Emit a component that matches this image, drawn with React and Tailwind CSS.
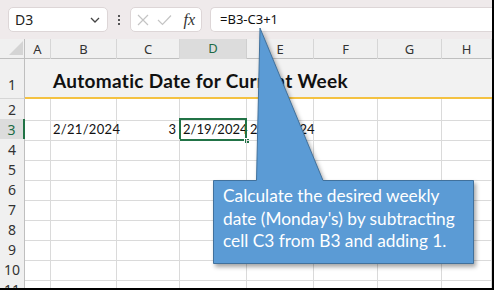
import React from "react";

const cols = ["A", "B", "C", "D", "E", "F", "G", "H"];
const grid =
  "grid grid-cols-[25px_26px_66px_63px_67px_67px_64px_64px_1fr]";
const uiFont = { fontFamily: '"Noto Sans", "Open Sans", sans-serif' };
const cellFont = { fontFamily: 'Lato, "Open Sans", sans-serif' };

function FormulaBar() {
  return (
    <div className="h-[39px] bg-[#efeaeb] flex items-center" style={uiFont}>
      <div className="ml-[8px] w-[100px] h-[25px] bg-white rounded-[5px] border border-[#ddd6d7] flex items-center justify-between pl-[6px] pr-[6px]">
        <span className="text-[14px] text-[#222]">D3</span>
        <svg width="12" height="8" viewBox="0 0 12 8">
          <path d="M2 2 L6 6 L10 2" fill="none" stroke="#444" strokeWidth="1.3" />
        </svg>
      </div>
      <div className="w-[22px] flex flex-col items-center gap-[2px]">
        <span className="w-[2px] h-[2px] bg-[#555]" />
        <span className="w-[2px] h-[2px] bg-[#555]" />
        <span className="w-[2px] h-[2px] bg-[#555]" />
      </div>
      <div className="w-[72px] h-[25px] bg-white rounded-[5px] border border-[#ddd6d7] flex items-center px-[4px] gap-[5px]">
        <svg width="16" height="16" viewBox="0 0 16 16">
          <path d="M3 3 L13 13 M13 3 L3 13" stroke="#c4c4c4" strokeWidth="1.2" />
        </svg>
        <svg width="17" height="16" viewBox="0 0 17 16">
          <path d="M2 8 L6.5 12.5 L15 3.5" fill="none" stroke="#c4c4c4" strokeWidth="1.2" />
        </svg>
        <span
          className="ml-auto mr-[2px] text-[16px] italic text-[#333]"
          style={{ fontFamily: '"Liberation Serif", serif' }}
        >
          fx
        </span>
      </div>
      <div className="ml-[8px] flex-1 h-[25px] bg-white rounded-l-[5px] border border-r-0 border-[#ddd6d7] flex items-center pl-[9px]">
        <span className="text-[13px] text-[#111]">=B3-C3+1</span>
      </div>
    </div>
  );
}

function Sheet() {
  const rows = [2, 3, 4, 5, 6, 7, 8, 9, 10, 11];
  return (
    <div style={uiFont}>
      {/* column headers */}
      <div className={`${grid} h-[20px] bg-[#f0f0f0] border-b border-[#bfbfbf]`}>
        <div className="relative border-r border-[#bfbfbf]">
          <svg className="absolute left-[9px] top-[2px]" width="14" height="14" viewBox="0 0 14 14">
            <path d="M14 0 L14 14 L0 14 Z" fill="#d4d4d4" />
          </svg>
        </div>
        {cols.map((c) => (
          <div
            key={c}
            className={
              c === "D"
                ? "flex items-center justify-center text-[13px] text-[#1d6b45] bg-[#dcdcdc] border-b-2 border-[#217346] border-r border-r-[#cfcfcf]"
                : "flex items-center justify-center text-[13px] text-[#333] border-r border-[#d6d6d6]"
            }
          >
            {c}
          </div>
        ))}
        <div />
      </div>

      {/* row 1 */}
      <div className={`${grid} h-[40px]`}>
        <div className="bg-[#f0f0f0] border-r border-b border-[#bfbfbf] border-b-[#d6d6d6] flex items-end justify-center pb-[3px] text-[14px] text-[#333]">
          1
        </div>
        <div className="col-span-8 bg-[#f2f2f2] border-b-2 border-[#f4c242] flex items-end pl-[28px] pb-[2px]">
          <span
            className="text-[19px] font-bold tracking-[0.3px] text-[#111] whitespace-nowrap"
            style={cellFont}
          >
            Automatic Date for Current Week
          </span>
        </div>
      </div>

      {rows.map((r) => (
        <div key={r} className={`${grid} h-[20px]`}>
          <div
            className={
              r === 3
                ? "bg-[#dcdcdc] border-r-2 border-r-[#217346] border-b border-b-[#d6d6d6] flex items-center justify-center text-[14px] text-[#1d6b45]"
                : "bg-[#f0f0f0] border-r border-r-[#bfbfbf] border-b border-b-[#d6d6d6] flex items-center justify-center text-[14px] text-[#333]"
            }
          >
            {r}
          </div>
          {cols.map((c) => (
            <div
              key={c}
              className="relative border-r border-b border-[#dadada] flex items-center text-[13px] text-[#111] whitespace-nowrap"
              style={cellFont}
            >
              {r === 3 && c === "B" && <span className="pl-[2px] tracking-[0.3px]">2/21/2024</span>}
              {r === 3 && c === "C" && <span className="ml-auto pr-[3px]">3</span>}
              {r === 3 && c === "D" && (
                <>
                  <span className="pl-[3px]">2/19/2024</span>
                  <div className="absolute left-[-1px] top-[-1px] right-[-1px] bottom-[-1px] border-2 border-[#217346]" />
                  <div className="absolute right-[-4px] bottom-[-4px] w-[6px] h-[6px] bg-[#217346] border border-white" />
                </>
              )}
              {r === 3 && c === "E" && <span className="pl-[3px]">2/25/2024</span>}
            </div>
          ))}
          <div className="border-b border-[#dadada]" />
        </div>
      ))}
    </div>
  );
}

function Callout() {
  return (
    <>
      <svg
        className="absolute left-0 top-0 drop-shadow-[2px_3px_2px_rgba(0,0,0,0.35)]"
        width="492"
        height="288"
        viewBox="0 0 492 288"
      >
        <path
          d="M213.5 180.5 L256.5 180.5 L260 28 L323 180.5 L473.5 180.5 L473.5 263.5 L213.5 263.5 Z"
          fill="#5b9bd5"
          stroke="#41719c"
          strokeWidth="1"
        />
      </svg>
      <div
        className="absolute left-[223px] top-[185px] text-white text-[17.3px] leading-[22.5px]"
        style={cellFont}
      >
        Calculate the desired weekly
        <br />
        date (Monday's) by subtracting
        <br />
        cell C3 from B3 and adding 1.
      </div>
    </>
  );
}

export default function App() {
  return (
    <div className="w-[494px] h-[290px] overflow-hidden border-r-2 border-b-2 border-black bg-white">
      <div className="relative w-[492px] h-[288px] overflow-hidden">
        <FormulaBar />
        <Sheet />
        <Callout />
      </div>
    </div>
  );
}
